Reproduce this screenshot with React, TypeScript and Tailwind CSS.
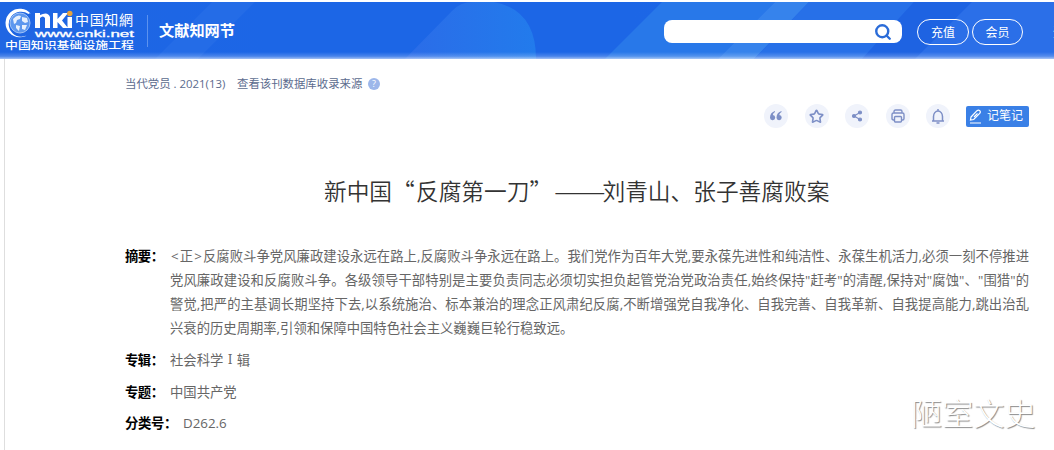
import { Search, Star, Share2, Printer, Bell } from 'lucide-react';

const abstractLines = [
  '党风廉政建设和反腐败斗争。各级领导干部特别是主要负责同志必须切实担负起管党治党政治责任,始终保持"赶考"的清醒,保持对"腐蚀"、"围猎"的',
  '警觉,把严的主基调长期坚持下去,以系统施治、标本兼治的理念正风肃纪反腐,不断增强党自我净化、自我完善、自我革新、自我提高能力,跳出治乱',
];

function HeaderPattern() {
  return (
    <svg className="absolute inset-0 h-full w-full" viewBox="0 0 1054 57" preserveAspectRatio="none">
      <defs>
        <linearGradient id="base" x1="0" x2="1">
          <stop offset="0" stopColor="#1f66e3" />
          <stop offset="0.25" stopColor="#1c66e6" />
          <stop offset="0.6" stopColor="#1c66e6" />
          <stop offset="1" stopColor="#2468e6" />
        </linearGradient>
        <linearGradient id="blob" x1="0" x2="1">
          <stop offset="0" stopColor="#2b6ce8" />
          <stop offset="1" stopColor="#227bec" />
        </linearGradient>
        <linearGradient id="fade" x1="0" x2="0" y1="0" y2="1">
          <stop offset="0" stopColor="#fff" stopOpacity="0" />
          <stop offset="0.6" stopColor="#fff" stopOpacity="0.2" />
          <stop offset="1" stopColor="#fff" stopOpacity="0.6" />
        </linearGradient>
      </defs>
      <rect width="1054" height="57" fill="url(#base)" />
      <path d="M212 0h43l-57 57h-43z" fill="#2a70e8" opacity="0.6" />
      <path d="M405 57L452 9q8-9 21-9h21q42 8 42 57z" fill="url(#blob)" />
      <path d="M662 0h113l-57 57H605z" fill="#2878e9" />
      <path d="M775 0h34l-55 57h-36z" fill="#3683ec" />
      <path d="M809 0h105l-52 57H754z" fill="#2770e8" />
      <path d="M914 0h58l-57 57h-53z" fill="#1e63e2" />
      <path d="M972 0h82v57H915z" fill="#2b6fe8" />
      <rect y="50" width="1054" height="7" fill="url(#fade)" />
    </svg>
  );
}

function Logo() {
  return (
    <svg className="h-[50px] w-[142px] shrink-0" viewBox="0 0 142 50" fill="#fff">
      {/* globe */}
      <circle cx="20" cy="21" r="10" fill="#5d97ee" stroke="#b9d3f8" strokeWidth="0.8" />
      <path d="M13 17q4-5 8-3l-1 3-3 1-1 3-2 1zM22 15l5 1 1 4-3 1-3-2zM16 23l4 1-1 5-3-3zM22 23l5 0-2 5-3-1z" opacity="0.85" />
      <path d="M31 12A14.300 14.300 0 1 0 30 31 12.500 12.500 0 1 1 28.500 12q1-1.500 2.500 0z" />
      <path d="M35 26V11h5v2q8-4 10 2v11h-5V16q-2-3-5 0v10z" />
      <path d="M53 11h4.500v6l5.500-6h5l-6 7.500 6 7.500h-5l-5.500-6v6H53zM67.500 15h4.500v11h-4.500z" />
      <circle cx="69.800" cy="11.500" r="2.700" fill="#e7a33d" />
      <text x="75" y="23" fontSize="14" textLength="58" className="font-['Noto_Sans_CJK_SC',sans-serif]">中国知網</text>
      <text x="35" y="35" fontSize="9.5" textLength="99" lengthAdjust="spacingAndGlyphs" stroke="#fff" strokeWidth="0.3" className="font-['Liberation_Sans',sans-serif]">www.cnki.net</text>
      <text x="5" y="47" fontSize="10" fontWeight="500" textLength="129" lengthAdjust="spacingAndGlyphs" className="font-['Noto_Sans_CJK_SC',sans-serif]">中国知识基础设施工程</text>
    </svg>
  );
}

function Header() {
  return (
    <header className="relative mt-[2px] h-[57px] overflow-hidden text-white">
      <HeaderPattern />
      <div className="relative flex h-full w-[1070px] items-start">
        <Logo />
        <div className="ml-[5px] mt-[13px] h-[32px] w-px bg-[#5c92ef]" />
        <div className="ml-[11px] mt-[16px] w-[76px] text-[15.2px] leading-[24px] font-bold whitespace-nowrap">文献知网节</div>
        <div className="ml-[429px] mt-[18px] flex h-[23px] w-[238px] items-center justify-end rounded-[8px] bg-white pr-[10px]">
          <Search className="h-[18px] w-[18px] text-[#2b6cd8]" strokeWidth={3.2} />
        </div>
        <button className="ml-[15px] mt-[17px] h-[26px] w-[52px] rounded-full border border-white text-[12px] leading-[25px]">充值</button>
        <button className="ml-[3px] mt-[17px] h-[26px] w-[51px] rounded-full border border-white text-[12px] leading-[25px]">会员</button>
        <span className="ml-[30px] mt-[19px] text-[12px] leading-[24px]">登</span>
      </div>
    </header>
  );
}

function Toolbar() {
  const circle = 'flex h-6 w-6 items-center justify-center rounded-full bg-[#f0f3fb] text-[#7d8fc6]';
  return (
    <div className="flex h-[26px] items-center justify-end pr-[25px]">
      <div className="mr-[16px] flex gap-[16.5px]">
        <div className={circle}>
          <svg className="h-[10px] w-[12px]" viewBox="0 0 12 10" fill="currentColor">
            <path d="M5 0C2 1 0 3 0 6.500A2.600 2.600 0 1 0 2.800 4Q3 2 5 1zM11.500 0C8.500 1 6.500 3 6.500 6.500A2.600 2.600 0 1 0 9.300 4Q9.500 2 11.500 1z" />
          </svg>
        </div>
        <div className={circle}><Star className="h-[15px] w-[15px]" strokeWidth={2.6} /></div>
        <div className={circle}><Share2 className="h-[12px] w-[12px] -scale-x-100 rotate-180 fill-current" strokeWidth={2.4} /></div>
        <div className={circle}>
          <svg className="h-[14px] w-[14px]" viewBox="0 0 14 14" fill="none" stroke="currentColor" strokeWidth="1.400">
            <path d="M3 4V2.500Q3 1 4.500 1h5Q11 1 11 2.500V4M3 11H2.500Q1 11 1 9.500v-4Q1 4 2.500 4h9Q13 4 13 5.500v4Q13 11 11.500 11H11" />
            <rect x="3.500" y="7.500" width="7" height="5.500" rx="1" />
          </svg>
        </div>
        <div className={circle}>
          <svg className="h-[15px] w-[14px]" viewBox="0 0 14 15" fill="none" stroke="currentColor" strokeWidth="1.500">
            <path d="M7 0v2M1 12h12M2.500 12V7.500a4.500 5.500 0 0 1 9 0V12M5.500 14h3" />
          </svg>
        </div>
      </div>
      <button className="flex h-[21px] w-[63px] items-center rounded-[2px] bg-[#3a80e6] pl-[3px] text-[12px] leading-[20px] whitespace-nowrap text-white">
        <svg className="mr-[5px] h-[15px] w-[13px] shrink-0" viewBox="0 0 13 15" fill="none" stroke="#fff" strokeWidth="1.2">
          <path d="M2 8L8 1.700Q9.500.500 10.700 1.700t0 2.700L4.700 10.500 1.500 11zM1 14h11" />
          <path d="M5 8L8.500 4.500" />
        </svg>
        记笔记
      </button>
    </div>
  );
}

export default function App() {
  return (
    <div className="h-[450px] overflow-hidden bg-white font-['Open_Sans','Noto_Sans_CJK_SC',sans-serif]">
      <Header />
      <main className="relative ml-[4px] h-[391px] border-l border-[#dedede]">
        <div className="flex h-[44px] items-start pt-[15px] pl-[120px] text-[11.4px] leading-[20px] text-[#5b6b8e]">
          <span className="w-[112px] whitespace-nowrap">当代党员 . 2021(13)</span>
          <span className="w-[126px] whitespace-nowrap">查看该刊数据库收录来源</span>
          <span className="mt-[4px] ml-[5px] flex h-[12px] w-[12px] items-center justify-center rounded-full bg-[#9db7ea] text-[9px] text-white">?</span>
        </div>
        <Toolbar />
        <h1 className="mt-[45px] ml-[319px] flex h-[34px] text-[22.7px] leading-[34px] font-[350] whitespace-nowrap text-[#333] font-['Noto_Sans_CJK_SC',sans-serif]">
          <span className="w-[68px]">新中国</span>
          <span className="w-[24px]">“</span>
          <span className="w-[113.5px]">反腐第一刀</span>
          <span className="w-[24px]">”</span>
          <span className="w-[49px]"><span className="inline-block origin-left scale-x-[1.36]">——</span></span>
          <span>刘青山、张子善腐败案</span>
        </h1>
        <div className="mt-[36px] ml-[120px] flex text-[13.33px] leading-[24px] text-[#666]">
          <b className="w-[45px] shrink-0 tracking-[-0.5px] text-black">摘要：</b>
          <div className="w-[859px]">
            <div className="flex whitespace-nowrap">
              <span className="w-[33px] pl-px tracking-[1.2px]">{'<正>'}</span>
              <p className="flex-1 [text-align-last:justify]">反腐败斗争党风廉政建设永远在路上,反腐败斗争永远在路上。我们党作为百年大党,要永葆先进性和纯洁性、永葆生机活力,必须一刻不停推进</p>
            </div>
            {abstractLines.map((line) => (
              <p key={line} className="whitespace-nowrap [text-align-last:justify]">{line}</p>
            ))}
            <p className="w-[402px] whitespace-nowrap [text-align-last:justify]">兴衰的历史周期率,引领和保障中国特色社会主义巍巍巨轮行稳致远。</p>
          </div>
        </div>
        <div className="mt-[8px] ml-[120px] flex flex-col gap-[7.5px] text-[13.33px] leading-[24px] text-[#666]">
          <div className="flex"><b className="w-[45px] tracking-[-0.5px] text-black">专辑：</b>社会科学<span className="w-[13.4px] text-center font-['DejaVu_Serif',serif] text-[12px]">Ⅰ</span>辑</div>
          <div className="flex"><b className="w-[45px] tracking-[-0.5px] text-black">专题：</b>中国共产党</div>
          <div className="flex"><b className="w-[58px] tracking-[-0.3px] text-black">分类号：</b>D262.6</div>
        </div>
        <div className="absolute top-[329px] left-[906px] text-[31px] leading-[48px] font-light tracking-[0.2px] whitespace-nowrap text-white [text-shadow:1px_1px_1px_#888] font-['Noto_Sans_CJK_SC',sans-serif]">陋室文史</div>
      </main>
    </div>
  );
}
